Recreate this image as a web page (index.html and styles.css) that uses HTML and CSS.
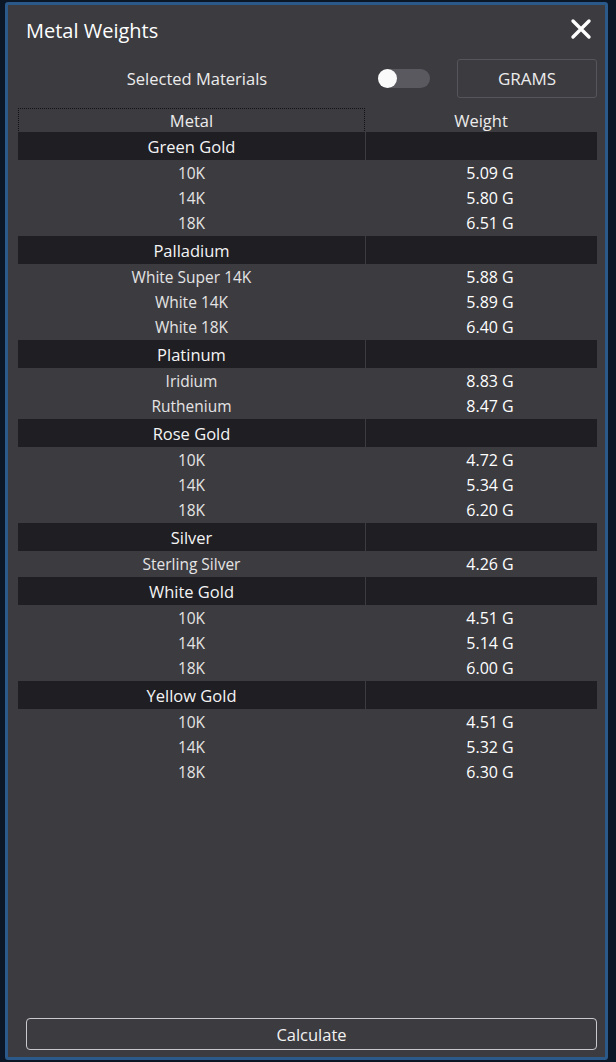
FILE: index.html
```html
<!DOCTYPE html>
<html>
<head>
<meta charset="utf-8">
<link rel="stylesheet" href="styles.css">
</head>
<body>
<div class="window">
  <div class="titlebar">
    <span class="title">Metal Weights</span>
    <svg class="close" width="22" height="22" viewBox="0 0 22 22"><path d="M3 3 L19 19 M19 3 L3 19" stroke="#fff" stroke-width="3.4" stroke-linecap="round"/></svg>
  </div>
  <div class="toolbar">
    <span class="label">Selected Materials</span>
    <span class="toggle"><span class="knob"></span></span>
    <span class="units">GRAMS</span>
  </div>
  <div class="table">
    <div class="head"><span class="hcell focus">Metal</span><span class="hcell">Weight</span></div>

    <div class="group"><span class="gname">Green Gold</span><span class="gfill"></span></div>
    <div class="row"><span>10K</span><span class="w">5.09 G</span></div>
    <div class="row"><span>14K</span><span class="w">5.80 G</span></div>
    <div class="row"><span>18K</span><span class="w">6.51 G</span></div>

    <div class="group"><span class="gname">Palladium</span><span class="gfill"></span></div>
    <div class="row"><span>White Super 14K</span><span class="w">5.88 G</span></div>
    <div class="row"><span>White 14K</span><span class="w">5.89 G</span></div>
    <div class="row"><span>White 18K</span><span class="w">6.40 G</span></div>

    <div class="group"><span class="gname">Platinum</span><span class="gfill"></span></div>
    <div class="row"><span>Iridium</span><span class="w">8.83 G</span></div>
    <div class="row"><span>Ruthenium</span><span class="w">8.47 G</span></div>

    <div class="group"><span class="gname">Rose Gold</span><span class="gfill"></span></div>
    <div class="row"><span>10K</span><span class="w">4.72 G</span></div>
    <div class="row"><span>14K</span><span class="w">5.34 G</span></div>
    <div class="row"><span>18K</span><span class="w">6.20 G</span></div>

    <div class="group"><span class="gname">Silver</span><span class="gfill"></span></div>
    <div class="row"><span>Sterling Silver</span><span class="w">4.26 G</span></div>

    <div class="group"><span class="gname">White Gold</span><span class="gfill"></span></div>
    <div class="row"><span>10K</span><span class="w">4.51 G</span></div>
    <div class="row"><span>14K</span><span class="w">5.14 G</span></div>
    <div class="row"><span>18K</span><span class="w">6.00 G</span></div>

    <div class="group"><span class="gname">Yellow Gold</span><span class="gfill"></span></div>
    <div class="row"><span>10K</span><span class="w">4.51 G</span></div>
    <div class="row"><span>14K</span><span class="w">5.32 G</span></div>
    <div class="row"><span>18K</span><span class="w">6.30 G</span></div>
  </div>
  <div class="calc">Calculate</div>
</div>
</body>
</html>
```
FILE: styles.css
```css
html, body {
  margin: 0;
  height: 100%;
}
body {
  background: #0b1727;
  padding: 2px 8px 2px 5px;
  box-sizing: border-box;
  font-family: "Open Sans", "Noto Sans", sans-serif;
  color: #ececec;
}
.window {
  height: 100%;
  box-sizing: border-box;
  border: 3px solid #2b5a8a;
  border-radius: 3px;
  background: #3c3b40;
  display: flex;
  flex-direction: column;
}
.titlebar {
  height: 50px;
  display: flex;
  align-items: center;
  justify-content: space-between;
  padding: 0 13px 0 18px;
}
.title {
  font-size: 20px;
  color: #fff;
}
.close {
  display: block;
  margin-top: -2px;
}
.toolbar {
  margin-top: 4px;
  height: 39px;
  display: flex;
  align-items: center;
}
.label {
  width: 342px;
  margin-left: 18px;
  text-align: center;
  font-size: 16.5px;
}
.toggle {
  margin-left: 10px;
  width: 52px;
  height: 19px;
  border-radius: 10px;
  background: #5a5960;
  display: flex;
  align-items: center;
}
.knob {
  width: 19px;
  height: 19px;
  border-radius: 50%;
  background: #fafafa;
}
.units {
  margin-left: 27px;
  width: 140px;
  height: 39px;
  box-sizing: border-box;
  border: 1px solid #56555b;
  border-radius: 3px;
  display: flex;
  align-items: center;
  justify-content: center;
  font-size: 17px;
}
.table {
  margin: 10px 8px 0 10px;
  flex: 1;
}
.head, .group, .row {
  display: grid;
  grid-template-columns: 347px 1fr;
}
.head {
  height: 23px;
}
.hcell {
  display: flex;
  align-items: center;
  justify-content: center;
  font-size: 16.5px;
}
.focus {
  border: 1px dotted #121212;
}
.group {
  margin-top: 1px;
  height: 28px;
  column-gap: 1px;
}
.gname, .gfill {
  background: #1f1e23;
}
.gname {
  display: flex;
  align-items: center;
  justify-content: center;
  font-size: 16.5px;
  color: #f4f4f4;
}
.row {
  height: 25px;
  font-size: 15.5px;
}
.row span {
  display: flex;
  align-items: center;
  justify-content: center;
  color: #e4e4e4;
}
.row .w {
  color: #ffffff;
  font-size: 16px;
  font-weight: 500;
  padding-left: 18px;
}
.calc {
  margin: 0 8px 7px 18px;
  height: 32px;
  box-sizing: border-box;
  border: 1.5px solid #c9c9cc;
  border-radius: 4px;
  display: flex;
  align-items: center;
  justify-content: center;
  font-size: 16.5px;
  color: #f2f2f2;
}
```
